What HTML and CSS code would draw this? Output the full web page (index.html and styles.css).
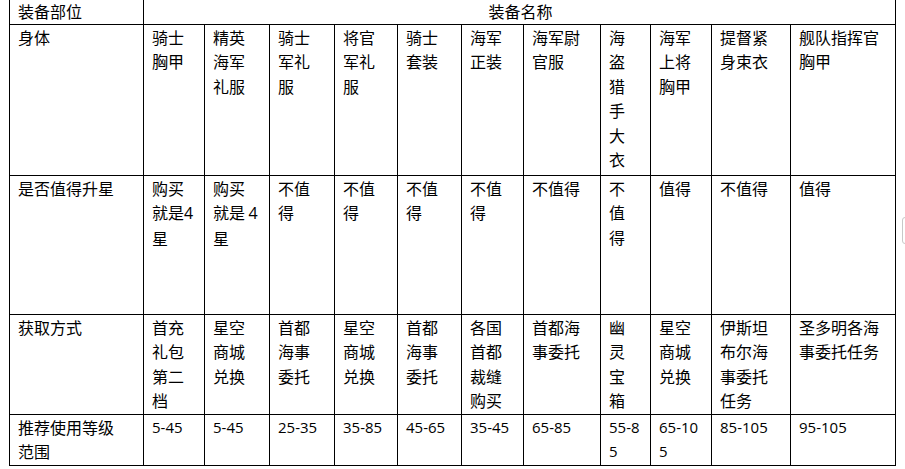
FILE: index.html
```html
<!DOCTYPE html>
<html lang="zh">
<head>
<meta charset="utf-8">
<title>装备</title>
<link rel="stylesheet" href="styles.css">
</head>
<body>
<table class="gear">
  <colgroup>
    <col class="c1"><col class="c2"><col class="c3"><col class="c4"><col class="c5"><col class="c6"><col class="c7"><col class="c8"><col class="c9"><col class="c10"><col class="c11"><col class="c12">
  </colgroup>
  <tr class="r0">
    <td>装备部位</td>
    <td colspan="11" class="center">装备名称</td>
  </tr>
  <tr class="r1">
    <td>身体</td>
    <td>骑士<br>胸甲</td>
    <td>精英<br>海军<br>礼服</td>
    <td>骑士<br>军礼<br>服</td>
    <td>将官<br>军礼<br>服</td>
    <td>骑士<br>套装</td>
    <td>海军<br>正装</td>
    <td>海军尉<br>官服</td>
    <td>海<br>盗<br>猎<br>手<br>大<br>衣</td>
    <td>海军<br>上将<br>胸甲</td>
    <td>提督紧<br>身束衣</td>
    <td>舰队指挥官<br>胸甲</td>
  </tr>
  <tr class="r2">
    <td>是否值得升星</td>
    <td>购买<br>就是<span class="num big">4</span><br>星</td>
    <td>购买<br>就是 <span class="num big">4</span><br>星</td>
    <td>不值<br>得</td>
    <td>不值<br>得</td>
    <td>不值<br>得</td>
    <td>不值<br>得</td>
    <td>不值得</td>
    <td>不<br>值<br>得</td>
    <td>值得</td>
    <td>不值得</td>
    <td>值得</td>
  </tr>
  <tr class="r3">
    <td>获取方式</td>
    <td>首充<br>礼包<br>第二<br>档</td>
    <td>星空<br>商城<br>兑换</td>
    <td>首都<br>海事<br>委托</td>
    <td>星空<br>商城<br>兑换</td>
    <td>首都<br>海事<br>委托</td>
    <td>各国<br>首都<br>裁缝<br>购买</td>
    <td>首都海<br>事委托</td>
    <td>幽<br>灵<br>宝<br>箱</td>
    <td>星空<br>商城<br>兑换</td>
    <td>伊斯坦<br>布尔海<br>事委托<br>任务</td>
    <td>圣多明各海<br>事委托任务</td>
  </tr>
  <tr class="r4">
    <td>推荐使用等级<br>范围</td>
    <td class="num">5-45</td>
    <td class="num">5-45</td>
    <td class="num">25-35</td>
    <td class="num">35-85</td>
    <td class="num">45-65</td>
    <td class="num">35-45</td>
    <td class="num">65-85</td>
    <td class="num">55-8<br>5</td>
    <td class="num">65-10<br>5</td>
    <td class="num">85-105</td>
    <td class="num">95-105</td>
  </tr>
</table>
<div class="handle"></div>
</body>
</html>
```
FILE: styles.css
```css
html, body {
  margin: 0;
  padding: 0;
  background: #ffffff;
}
body {
  position: relative;
  width: 905px;
  height: 469px;
  overflow: hidden;
  font-family: "Noto Sans CJK SC", sans-serif;
  font-size: 16px;
  color: #000000;
}
.gear {
  border-collapse: collapse;
  table-layout: fixed;
  width: 886px;
  margin-top: -2px;
  margin-left: 9px;
}
.gear td {
  border: 1px solid #000000;
  padding: 0 2px 0 8px;
  vertical-align: top;
  line-height: 24.4px;
  white-space: nowrap;
  overflow: hidden;
}
.gear td.center {
  text-align: center;
  padding-left: 4px;
}
.c1 { width: 134px; }
.c2 { width: 61px; }
.c3 { width: 65px; }
.c4 { width: 65px; }
.c5 { width: 63px; }
.c6 { width: 64px; }
.c7 { width: 62px; }
.c8 { width: 77px; }
.c9 { width: 50px; }
.c10 { width: 61px; }
.c11 { width: 79px; }
.c12 { width: 105px; }
.r0 td { height: 25px; }
.r1 td { height: 150px; }
.r2 td { height: 138px; }
.r3 td { height: 99px; }
.r4 td { height: 50px; }
.num {
  font-family: "Open Sans", "Noto Sans CJK SC", sans-serif;
  font-size: 15px;
}
.num.big {
  font-size: 16px;
}
.handle {
  position: absolute;
  left: 902px;
  top: 217px;
  width: 6px;
  height: 27px;
  border: 1px solid #c8c8c8;
  border-radius: 3px;
  box-sizing: border-box;
}
```
